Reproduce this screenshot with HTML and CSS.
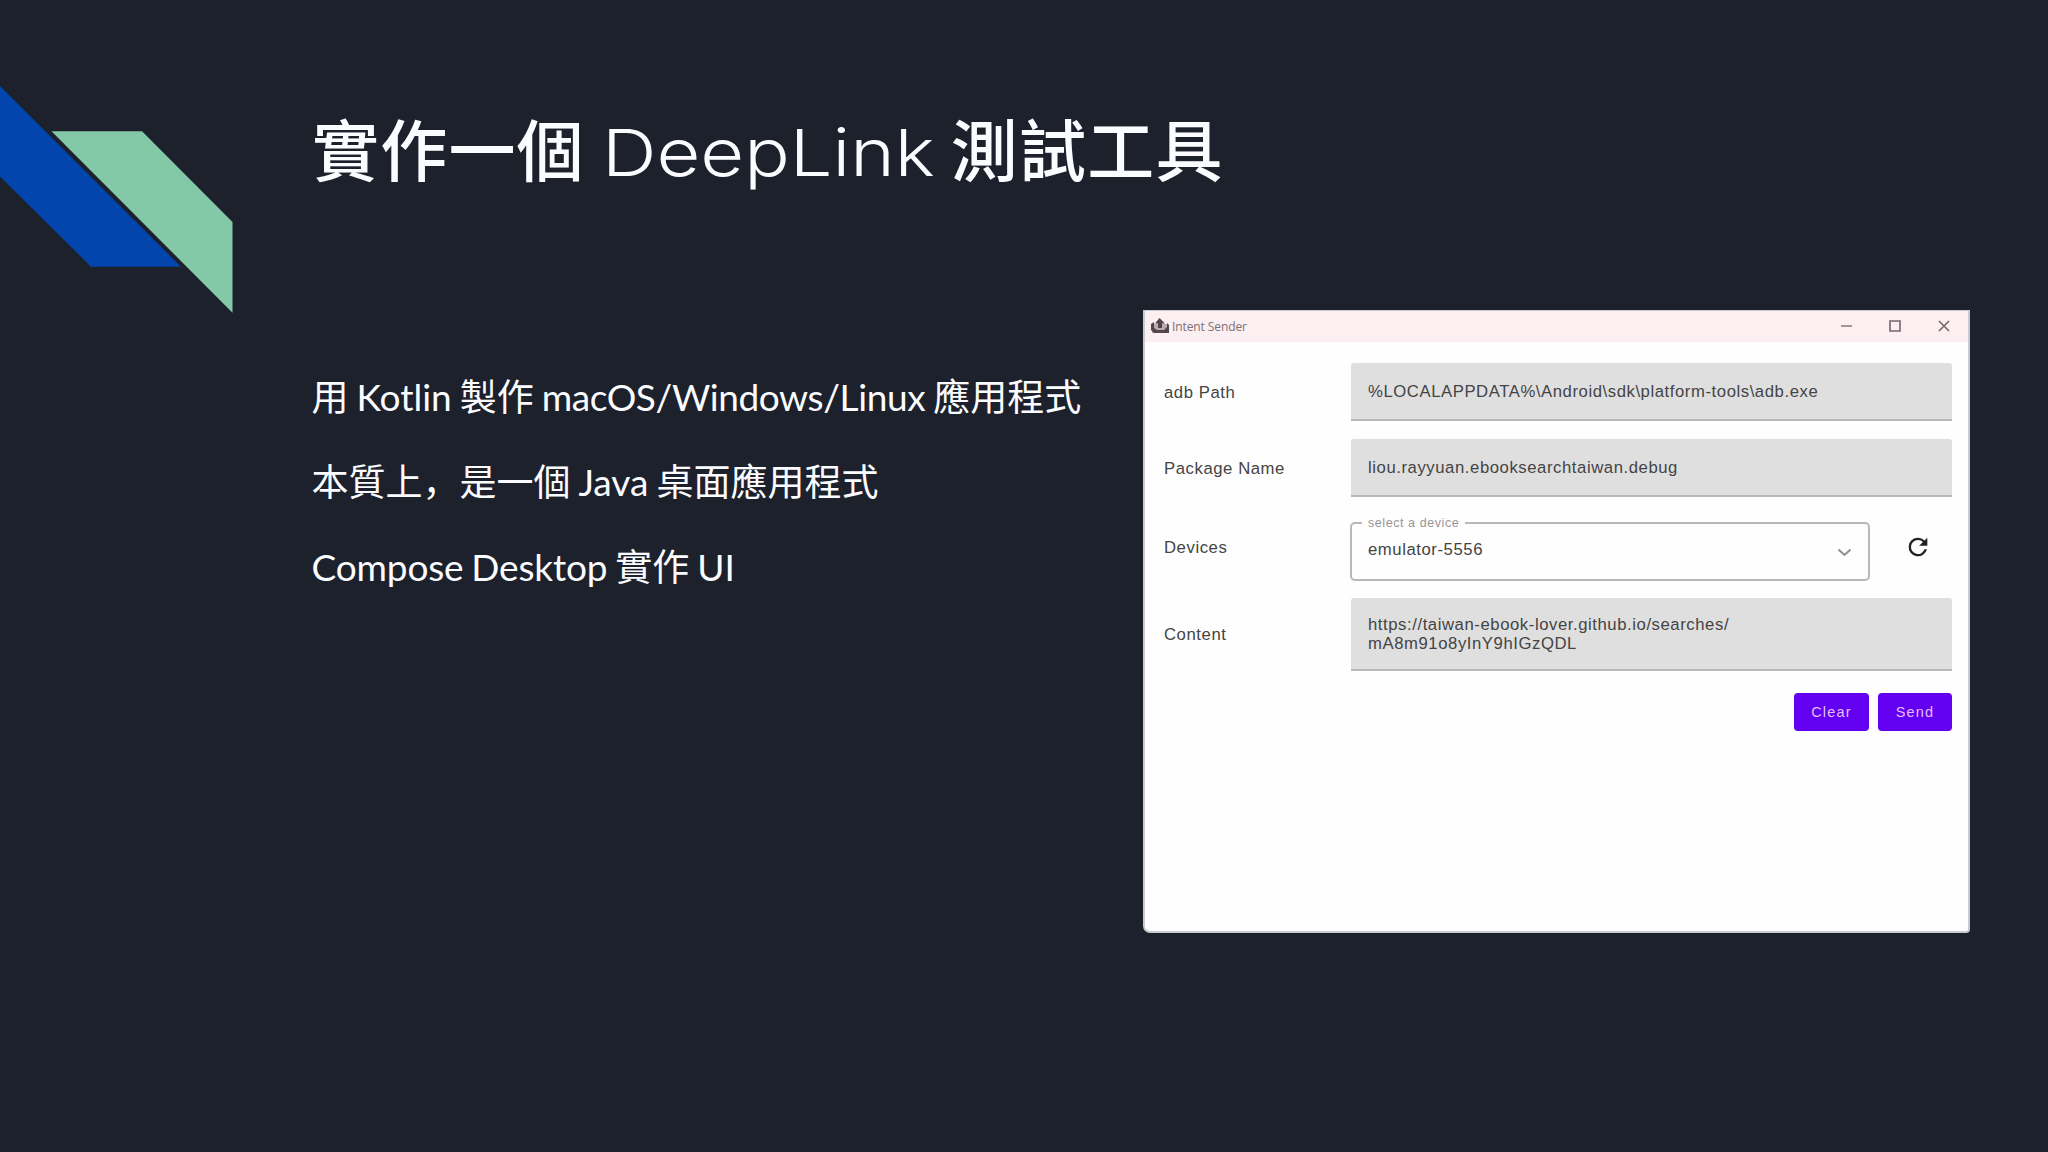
FILE: index.html
```html
<!DOCTYPE html>
<html lang="zh-Hant">
<head>
<meta charset="utf-8">
<title>實作一個 DeepLink 測試工具</title>
<link rel="stylesheet" href="styles.css">
</head>
<body>
<main class="slide">
  <svg class="ribbon" width="240" height="320" viewBox="0 0 240 320" aria-hidden="true">
    <path fill="#0145ac" d="M0 86 181 266.700H91L0 176.500Z"/>
    <path fill="#84c9a7" d="M51.500 131.300H142L232.500 222V312.700Z"/>
  </svg>
  <h1 class="title"><span>實作一個</span><span class="latin">DeepLink</span><span>測試工具</span></h1>
  <div class="columns">
    <div class="points">
      <p>用 Kotlin 製作 <span class="tight">macOS/Windows/Linux</span> 應用程式</p>
      <p>本質上<span class="comma" lang="zh-Hans">，</span>是一個 Java 桌面應用程式</p>
      <p><span class="snug">Compose Desktop</span> 實作 UI</p>
    </div>
    <section class="window">
      <header class="titlebar">
        <svg class="app-icon" width="18" height="17" viewBox="0 0 18 17"><path fill="#b9abb0" d="M1 6h16v9H1z"/><path fill="#51464b" d="M8.500 0 14 5.500h-3V10H7V5.500H4zM0 6l3-2v6l3 2h7l3-3V5l2 2v8H3L0 12z"/></svg>
        <span class="app-name">Intent Sender</span>
        <svg class="controls" width="112" height="14" viewBox="0 0 112 14" fill="none" stroke="#74686c" stroke-width="1.600"><path d="M1 7h11" stroke-width="1.300"/><path d="M50 2h10v10H50z"/><path d="m99 2 10 10m0-10L99 12"/></svg>
      </header>
      <div class="form">
        <div class="row r1"><span class="label">adb Path</span><div class="field">%LOCALAPPDATA%\Android\sdk\platform-tools\adb.exe</div></div>
        <div class="row r2"><span class="label">Package Name</span><div class="field">liou.rayyuan.ebooksearchtaiwan.debug</div></div>
        <div class="row r3"><span class="label">Devices</span>
          <div class="select"><span class="legend">select a device</span><span class="value">emulator-5556</span>
            <svg width="15" height="9" viewBox="0 0 15 9" fill="none" stroke="#8d8d8d" stroke-width="2"><path d="m1.500 1.500 6 5.500 6-5.500"/></svg>
          </div>
          <svg class="refresh" width="28" height="28" viewBox="0 0 24 24" fill="#222"><path d="M17.650 6.350A7.960 7.960 0 0 0 12 4a8 8 0 1 0 7.730 10h-2.080A6 6 0 1 1 12 6c1.660 0 3.140.690 4.220 1.780L13 11h7V4z"/></svg>
        </div>
        <div class="row r4"><span class="label">Content</span><div class="field">https://taiwan-ebook-lover.github.io/searches/<br>mA8m91o8yInY9hIGzQDL</div></div>
        <div class="actions"><button>Clear</button><button>Send</button></div>
      </div>
    </section>
  </div>
</main>
</body>
</html>
```
FILE: styles.css
```css
* { box-sizing: border-box; }
body { margin: 0; background: #1d212c; }
.slide {
  position: relative;
  width: 2048px;
  height: 1152px;
  padding: 97px 78px 0 311px;
  overflow: hidden;
  background: #1d212c;
  color: #fafcff;
}
.ribbon { position: absolute; left: 0; top: 0; }
.title {
  display: flex;
  align-items: baseline;
  height: 213px;
  margin: 0;
  padding-left: 1px;
  font: 500 67px/100px "Noto Sans CJK TC", sans-serif;
  letter-spacing: 1.200px;
}
.latin {
  width: 325px;
  margin: 0 24px 0 17px;
  font-family: Inter, sans-serif;
  font-weight: 300;
  font-size: 65px;
  letter-spacing: 0;
  white-space: nowrap;
  transform: scaleX(1.165);
  transform-origin: 0 0;
}
.columns { display: flex; justify-content: space-between; }
.points {
  padding-top: 44px;
  font: 400 37px/85px Lato, "Noto Sans CJK TC", sans-serif;
  word-spacing: -1.500px;
  white-space: nowrap;
}
.points p { height: 85px; margin: 0; padding-left: .500px; }
.tight { letter-spacing: -.390px; }
.snug { letter-spacing: -.150px; }
.comma { font-family: "Noto Sans CJK SC", sans-serif; line-height: 1; }
.window {
  width: 827px;
  height: 623px;
  border: solid #c9cbd3;
  border-width: 1px 2px 2px;
  border-radius: 0 0 4px 7px;
  background: #fefefe;
  color: #444;
  font: 16.700px/19px "Liberation Sans", Arial, sans-serif;
  letter-spacing: .570px;
}
.titlebar {
  display: flex;
  align-items: center;
  height: 31px;
  padding: 0 16px 0 6px;
  background: #fbeff1;
}
.app-name {
  margin-left: 3px;
  color: #7b7074;
  font: 12px/18px "Open Sans", sans-serif;
  letter-spacing: -.100px;
}
.controls { margin: -1px 0 0 auto; }
.form {
  display: flex;
  flex-direction: column;
  padding: 21px 16px 0 19px;
}
.row { display: flex; align-items: center; }
.label { width: 187px; flex: none; }
.field {
  display: flex;
  align-items: center;
  flex: 1;
  height: 58px;
  padding-left: 17px;
  border-bottom: 2px solid #b9b9b9;
  border-radius: 3px 3px 0 0;
  background: #dfdfdf;
  white-space: nowrap;
}
.r2 { margin-top: 18px; }
.r3 { height: 58px; margin-top: 25px; }
.r3 .label { margin-top: -8px; }
.r4 { margin-top: 18px; }
.r4 .field { height: 73px; }
.select {
  position: relative;
  display: flex;
  align-items: center;
  justify-content: space-between;
  width: 520px;
  height: 59px;
  margin-left: -1px;
  padding: 0 16px 4px 16px;
  border: 2px solid #b8b8b8;
  border-radius: 5px;
}
.select svg { margin-top: 6px; }
.legend {
  position: absolute;
  left: 10px;
  top: -10px;
  padding: 0 6px;
  background: #fefefe;
  color: #969696;
  font-size: 12.500px;
  line-height: 18px;
}
.refresh { margin: -8px 0 0 34px; }
.actions {
  display: flex;
  justify-content: flex-end;
  gap: 9px;
  margin-top: 22px;
}
button {
  width: 74px;
  height: 38px;
  padding: 0;
  border: 0;
  border-radius: 4px;
  background: #6300f2;
  color: #e3bfff;
  font: 14.500px/18px "Liberation Sans", Arial, sans-serif;
  letter-spacing: 1.200px;
}
button:first-child { width: 75px; }
```
